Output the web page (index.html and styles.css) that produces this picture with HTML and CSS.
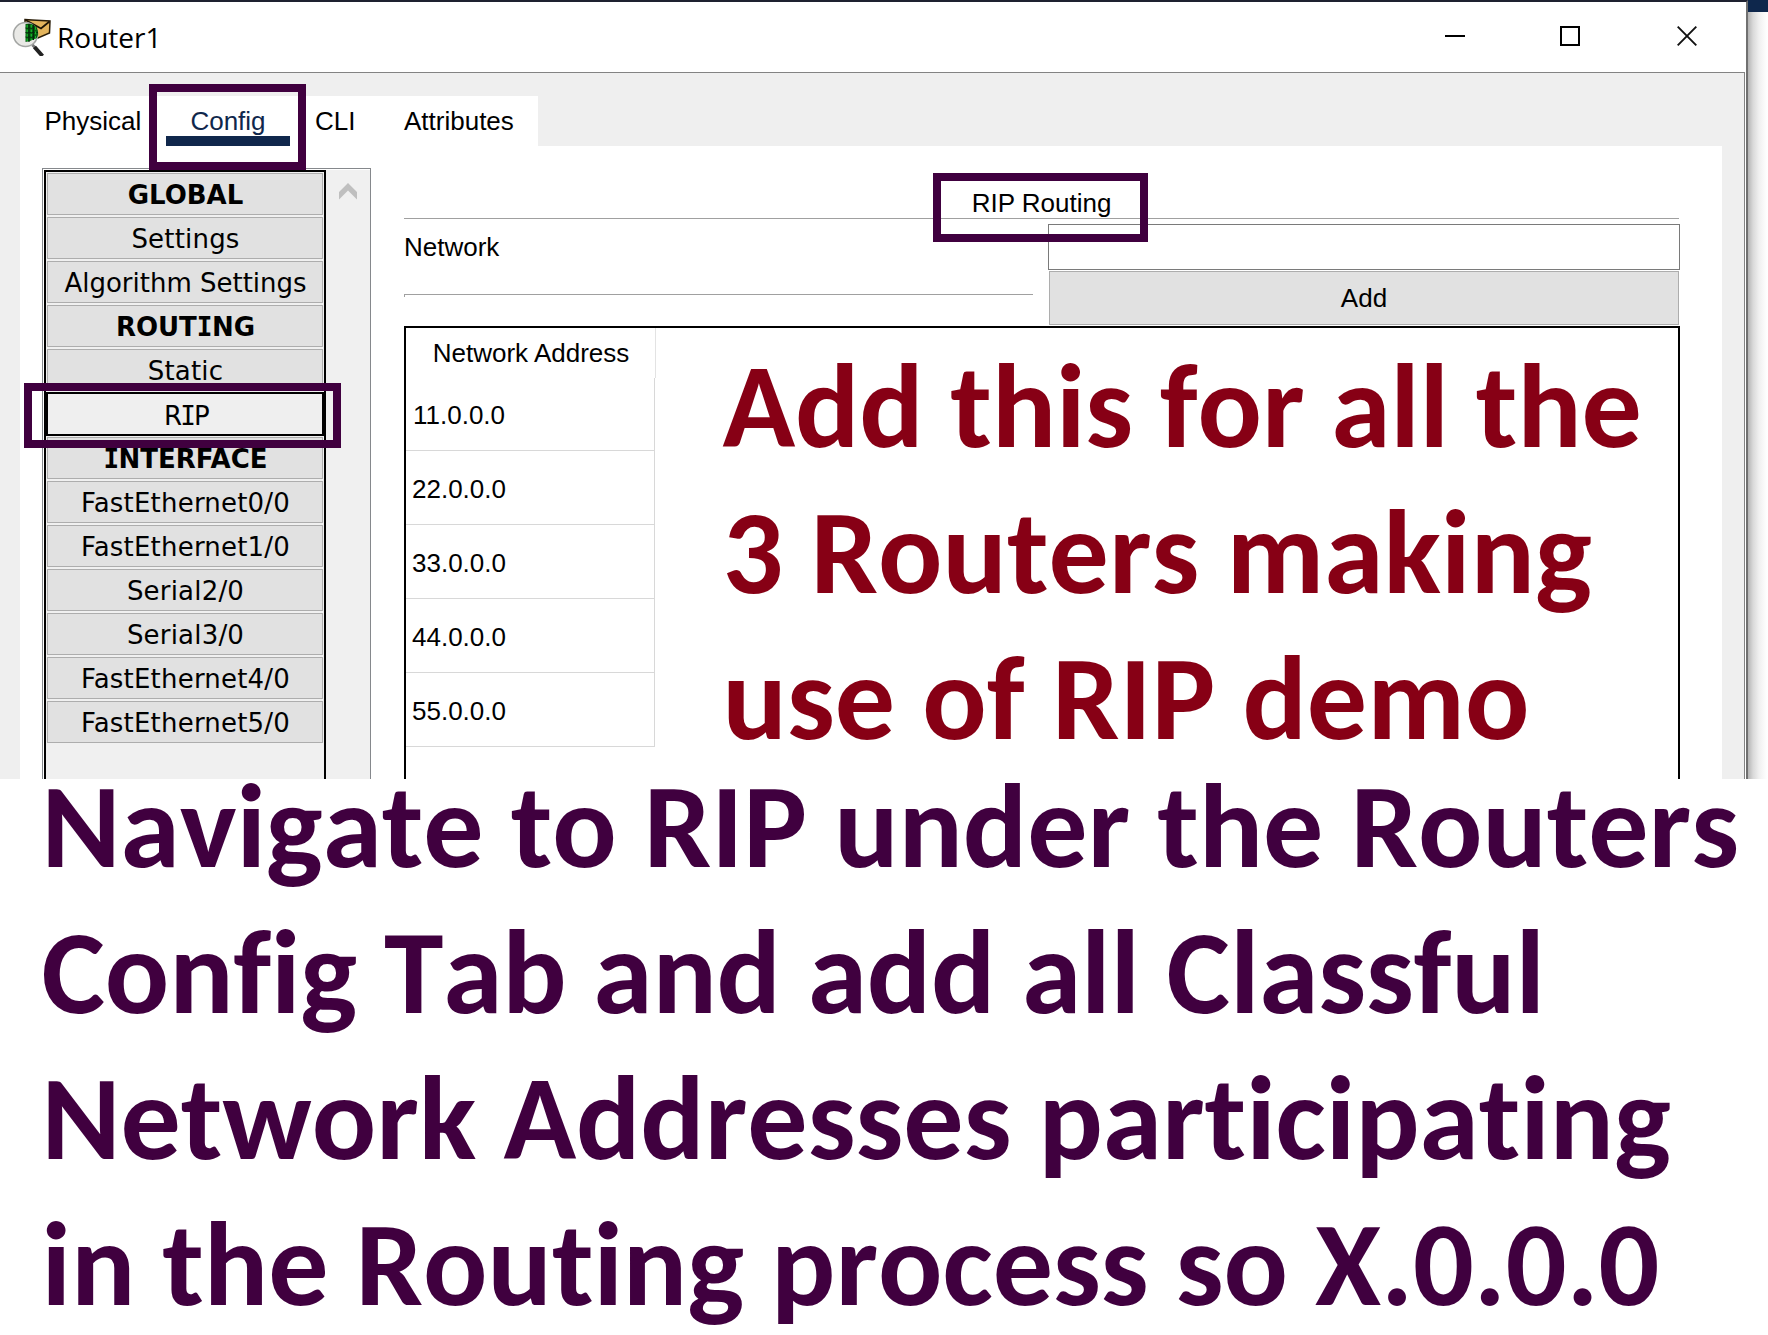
FILE: index.html
```html
<!DOCTYPE html>
<html lang="en">
<head>
<meta charset="utf-8">
<title>Router1</title>
<link rel="stylesheet" href="styles.css">
</head>
<body>
<div class="page">
  <div class="desktop">
    <section class="window">
      <header class="titlebar">
        <svg class="app-icon" width="40" height="40" viewBox="0 0 40 40">
          <path d="M13 3.500 L20 4 L38 5 L37.500 17 L26 22 L13 18Z" fill="#e3b45c" stroke="#2a1d08" stroke-width="1.500"/>
          <path d="M13.500 4 L29 12.500 L37.500 5.500" fill="none" stroke="#1d1405" stroke-width="1.800"/>
          <circle cx="13.500" cy="18.500" r="12" fill="#e9e9e6" stroke="#a3a5a3" stroke-width="1.600"/>
          <path d="M13.500 8 Q21 6.500 25 12 Q27.500 18 24.500 22 L18 25 L13.500 26Z" fill="#075f10"/>
          <path d="M13.500 12h11.500M13.500 16.500h12.500M13.500 21h11.500M17 8v18M21.500 8.500v15.500" stroke="#04290a" stroke-width="1.200"/>
          <path d="M15.200 9v16M19.300 9v15M23.500 11v12" stroke="#15b52a" stroke-width="1.300" stroke-dasharray="2.800 1.700"/>
          <path d="M20.500 29 L24 32.500" stroke="#777" stroke-width="3"/>
          <path d="M22.500 31 L30.500 40" stroke="#222" stroke-width="4"/>
        </svg>
        <h1 class="title">Router1</h1>
        <div class="controls">
          <svg width="20" height="20" viewBox="0 0 20 20"><path d="M0 10h20" stroke="#000" stroke-width="2"/></svg>
          <svg width="20" height="20" viewBox="0 0 20 20"><path d="M1 1h18v18H1z" fill="none" stroke="#000" stroke-width="2"/></svg>
          <svg width="20" height="20" viewBox="0 0 20 20"><path d="M.700 .700 19.300 19.300M19.300 .700 .700 19.300" stroke="#111" stroke-width="1.900"/></svg>
        </div>
      </header>
      <div class="client">
        <nav class="tabs">
          <span class="tab tab-physical">Physical</span>
          <span class="tab tab-config">Config</span>
          <span class="tab tab-cli">CLI</span>
          <span class="tab tab-attributes">Attributes</span>
        </nav>
        <div class="pane">
          <aside class="sidebar">
            <div class="menu">
              <div class="item heading">GLOBAL</div>
              <div class="item">Settings</div>
              <div class="item tight">Algorithm Settings</div>
              <div class="item heading">ROUT<span class="slab">I</span>NG</div>
              <div class="item">Static</div>
              <div class="item selected">R<span class="slab">I</span>P</div>
              <div class="item heading"><span class="slab">I</span>NTERFACE</div>
              <div class="item">FastEthernet0/0</div>
              <div class="item">FastEthernet1/0</div>
              <div class="item">Serial2/0</div>
              <div class="item">Serial3/0</div>
              <div class="item">FastEthernet4/0</div>
              <div class="item">FastEthernet5/0</div>
            </div>
            <div class="scrollbar">
              <svg width="18" height="17" viewBox="0 0 18 17"><path d="M0 9 9 0 18 9V16.500L9 7.500 0 16.500Z" fill="#bfbfbf"/></svg>
            </div>
          </aside>
          <main class="config">
            <h2 class="config-title">RIP Routing</h2>
            <div class="form">
              <div class="form-label">Network<div class="rule"></div></div>
              <div class="form-fields">
                <div class="input"></div>
                <div class="button">Add</div>
              </div>
            </div>
            <div class="table">
              <div class="column">
                <div class="column-head">Network Address</div>
                <div class="cell">11.0.0.0</div>
                <div class="cell">22.0.0.0</div>
                <div class="cell">33.0.0.0</div>
                <div class="cell">44.0.0.0</div>
                <div class="cell">55.0.0.0</div>
              </div>
              <p class="note note-red"><span class="snug">Add this for all the</span><br>3 Routers making<br>use of RIP demo</p>
            </div>
          </main>
        </div>
      </div>
    </section>
    <div class="backdrop"></div>
    <div class="mark mark-config"></div>
    <div class="mark mark-rip"></div>
    <div class="mark mark-title"></div>
  </div>
  <p class="note note-purple">Navigate to RIP under the Routers<br><span class="snug">Config Tab and add all Classful</span><br>Network Addresses participating<br>in the Routing process so X.0.0.0</p>
</div>
</body>
</html>
```
FILE: styles.css
```css
* { box-sizing: border-box; margin: 0; padding: 0; }
body { background: #fff; color: #000; font: 26px/30px "Liberation Sans", Arial, sans-serif; }
.page { width: 1768px; height: 1335px; overflow: hidden; }

.desktop { position: relative; display: flex; height: 779px; overflow: hidden; }
.window { width: 1748px; display: flex; flex-direction: column; border-top: 2px solid #1e2130; border-right: 2px solid #707070; }
.backdrop { flex: 1; border-top: 12px solid #0e274c; background: linear-gradient(90deg, #b4b4b4 0, #d9d9d9 5px, #f0f0f0 11px, #fdfdfd 18px, #fff 20px); }

.titlebar { flex: none; display: flex; align-items: flex-start; height: 70px; padding: 14px 49px 0 12px; background: #fff; }
.app-icon { flex: none; }
.title { margin: 1px 0 0 5px; font: 400 28px/40px "Open Sans", "Segoe UI", sans-serif; }
.controls { display: flex; margin: 10px 0 0 auto; }
.controls svg { margin-left: 95px; }
.controls svg:last-child { margin-left: 97px; }

.client { flex: 1; display: flex; flex-direction: column; margin-right: 1px; padding: 23px 22px 0 20px; background: #efefef; border-top: 1px solid #838383; border-right: 1px solid #838383; }
.tabs { display: flex; width: 518px; height: 50px; padding-left: 24.5px; background: #fff; }
.tab { height: 50px; padding-top: 10px; }
.tab-physical { width: 121.5px; }
.tab-config { width: 124px; height: 50px; color: #10274c; text-align: center; border-bottom: 10px solid #10274c; }
.tab-cli { width: 114px; padding-left: 25px; }

.pane { flex: 1; display: flex; gap: 33px; padding: 22px 42px 0 22px; background: #fff; }
.sidebar { width: 329px; display: flex; padding: 1px 0 0 1px; border: 1px solid #85888c; border-bottom: 0; background: #fff; }
.menu { width: 282px; display: flex; flex-direction: column; gap: 2px; padding: 1px; background: #f0f0f0; border: 2px solid #000; border-bottom: 0; }
.item { height: 42px; padding: 1px 0 0 1px; border: 1px solid #adadad; background: #e1e1e1; font: 26px/40px "DejaVu Sans", Verdana, sans-serif; letter-spacing: 0.2px; text-align: center; white-space: nowrap; }
.tight { letter-spacing: 0; }
.heading { font-weight: 700; letter-spacing: 0; }
.slab { font-family: "DejaVu Sans Mono", monospace; line-height: 1; }
.heading .slab { margin-right: -0.5px; }
.selected { height: 44px; margin: -1px; padding: 3px 0 0 4px; line-height: 38px; border: 2px solid #000; background: #efefef; }
.selected .slab { margin: 0 -2px; }
.scrollbar { flex: 1; padding: 13px 0 0 13px; background: #f0f0f0; }
.scrollbar svg { display: block; }

.config { flex: 1; display: flex; flex-direction: column; min-width: 0; }
.config-title { height: 51px; margin-right: 1px; padding-top: 20px; font-size: 26px; font-weight: 400; text-align: center; border-bottom: 1px solid #a0a0a0; }
.form { display: flex; height: 107px; justify-content: space-between; }
.form-label { width: 629px; padding-top: 13px; }
.rule { height: 3px; margin-top: 32px; border: solid #a0a0a0; border-width: 1px 0 0 1px; }
.form-fields { width: 632px; padding-top: 5px; }
.input { height: 46px; border: 1px solid #7a7a7a; background: #fff; }
.button { height: 54px; margin: 1px 1px 0; padding-top: 11px; border: 1px solid #adadad; background: #e1e1e1; text-align: center; }
.table { flex: 1; display: flex; border: 2px solid #000; border-bottom: 0; }
.column { width: 250px; }
.column-head { height: 50px; padding: 10px 0 0 1px; text-align: center; border-right: 1px solid #e3e3e3; }
.cell { width: 249px; height: 74px; padding: 23px 0 0 6px; border: solid #d8d8d8; border-width: 0 1px 1px 0; }
.cell:nth-child(2) { height: 73px; padding: 22px 0 0 7px; }

.note { position: relative; font: 700 120px/146px Carlito, Calibri, Lato, sans-serif; font-kerning: none; font-variant-ligatures: none; white-space: nowrap; }
.note-red { margin: 5px 0 0 66.5px; color: #870015; }
.note-purple { margin: -26px 0 0 41.5px; color: #40003f; letter-spacing: -0.06px; }
.note .snug { letter-spacing: -0.2px; }

.mark { position: absolute; border: 8px solid #40003f; }
.mark-config { left: 149px; top: 84px; width: 157px; height: 86px; }
.mark-rip { left: 24px; top: 383px; width: 317px; height: 65px; }
.mark-title { left: 933px; top: 173px; width: 215px; height: 69px; }
```
